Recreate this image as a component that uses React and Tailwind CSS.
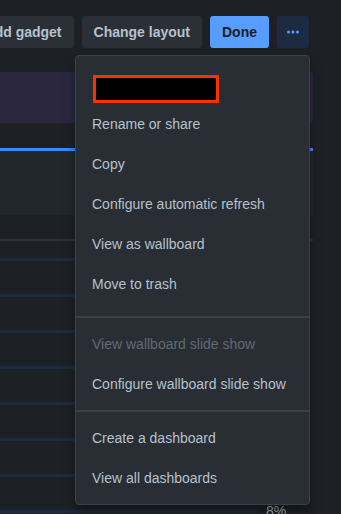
import { useState } from "react";

const MENU_SECTIONS = [
  {
    pad: "pt-2 pb-3",
    items: [
      { redacted: true },
      { label: "Rename or share" },
      { label: "Copy" },
      { label: "Configure automatic refresh" },
      { label: "View as wallboard" },
      { label: "Move to trash" },
    ],
  },
  {
    pad: "py-[6px]",
    items: [
      { label: "View wallboard slide show", disabled: true },
      { label: "Configure wallboard slide show" },
    ],
  },
  {
    pad: "py-[6px]",
    items: [{ label: "Create a dashboard" }, { label: "View all dashboards" }],
  },
];

const ROWS = ["14%", "22%", "9%", "31%", "12%", "18%", "6%", "8%"];

function MoreIcon() {
  return (
    <svg width="12" height="4" viewBox="0 0 12 4" fill="#579dff">
      <circle cx="1.5" cy="2" r="1.5" />
      <circle cx="6" cy="2" r="1.5" />
      <circle cx="10.5" cy="2" r="1.5" />
    </svg>
  );
}

// ─── Dropdown ────────────────────────────────────────────────────────────────
function DashboardMenu() {
  return (
    <div className="absolute left-[75px] top-[55px] w-[235px] rounded-[4px] border border-[#3b4148] bg-[#282e33] shadow-[0_8px_12px_rgba(0,0,0,0.35)]">
      {MENU_SECTIONS.map((section, i) => (
        <div
          key={i}
          className={`${section.pad} ${i > 0 ? "border-t-2 border-[#3b4148]" : ""}`}
        >
          {section.items.map((item, j) =>
            item.redacted ? (
              <div key={j} className="h-10 px-4 pt-[11px]">
                <div className="ml-[1px] h-[28px] w-[126px] border-[3px] border-[#ff2f00] bg-black" />
              </div>
            ) : (
              <div
                key={j}
                className={`flex h-10 items-center px-4 text-[14px] ${
                  item.disabled ? "text-[#5f6b76]" : "text-[#b6c2cf]"
                }`}
              >
                {item.label}
              </div>
            )
          )}
        </div>
      ))}
    </div>
  );
}

export default function App() {
  const [open] = useState(true);

  return (
    <div
      className="relative h-[514px] w-[341px] overflow-hidden bg-[#1d2125]"
      style={{ fontFamily: '"Liberation Sans", Arial, sans-serif' }}
    >
      {/* Toolbar */}
      <div className="flex justify-end gap-2 pr-8 pt-4">
        <button className="h-8 shrink-0 whitespace-nowrap rounded-[3px] bg-[#2a3036] px-3 text-[14px] font-semibold text-[#b6c2cf]">
          Add gadget
        </button>
        <button className="h-8 shrink-0 whitespace-nowrap rounded-[3px] bg-[#2a3036] px-3 text-[14px] font-semibold text-[#b6c2cf]">
          Change layout
        </button>
        <button className="h-8 shrink-0 rounded-[3px] bg-[#579dff] px-3 text-[14px] font-semibold text-[#1d2125]">
          Done
        </button>
        <button className="flex h-8 w-8 shrink-0 items-center justify-center rounded-[3px] bg-[#1c2b41]">
          <MoreIcon />
        </button>
      </div>

      {/* Dashboard body */}
      <div className="mt-6 mr-[28px] h-[51px] rounded-r-[3px] bg-[#2b273f]" />
      <div className="mt-[25px] mr-[28px] h-[3px] bg-[#388bff]" />
      <div className="mr-[28px] h-[64px] bg-[#22272b]" />
      <div className="mt-6 mr-[28px] h-[2px] bg-[#2c3237]" />
      <div className="mr-[28px] pr-[30px]">
        {ROWS.map((pct, i) => (
          <div key={i} className="flex h-9 items-center">
            <div className="h-[3px] flex-1 bg-[#1c2b41]" />
            <span className="ml-[9px] w-[17px] text-[14px] text-[#9fadbc]">{pct}</span>
          </div>
        ))}
      </div>

      {open && <DashboardMenu />}
    </div>
  );
}
